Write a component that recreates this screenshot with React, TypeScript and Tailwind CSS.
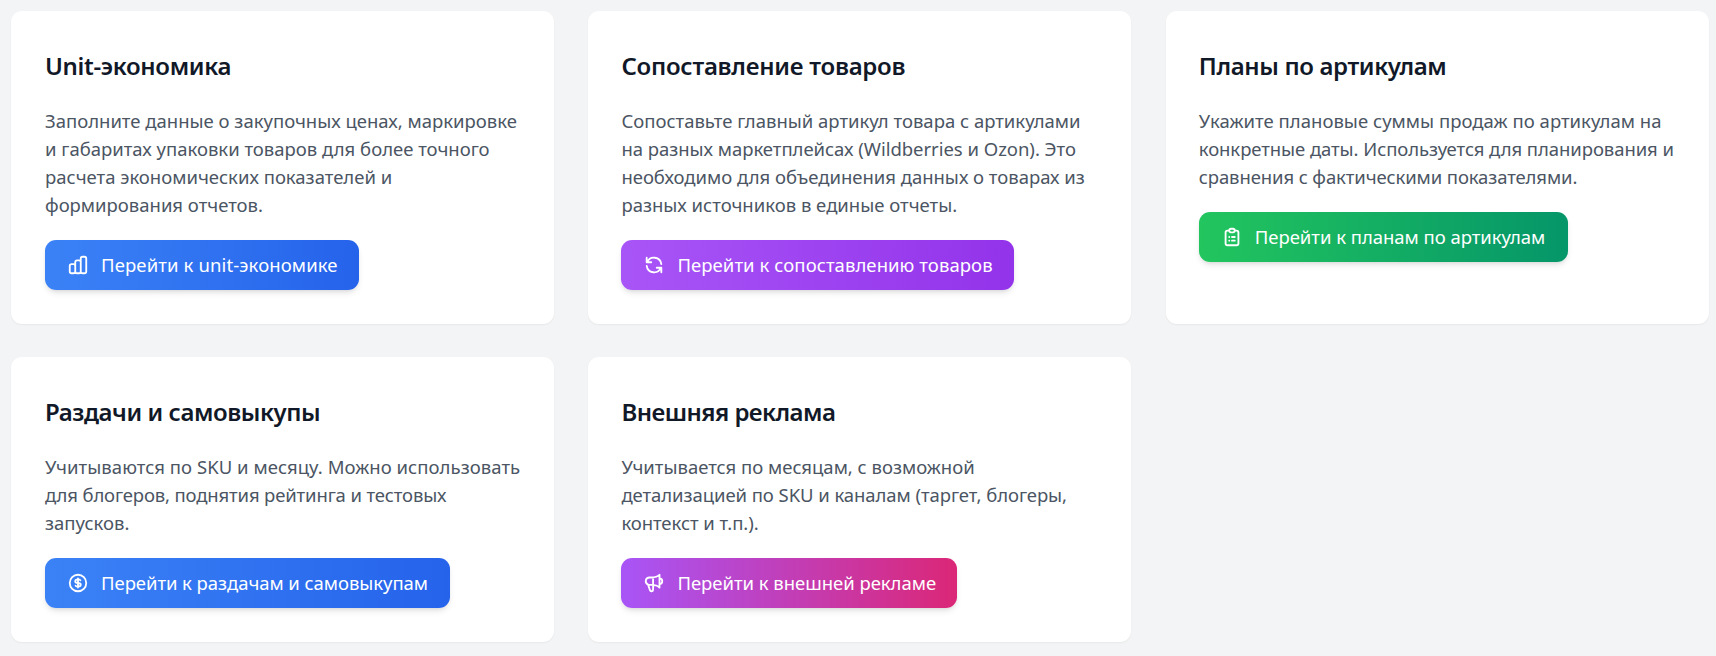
import React from "react";
import type { IconType } from "react-icons";
import {
  HiOutlineChartBar,
  HiOutlineClipboardList,
  HiOutlineCurrencyDollar,
  HiOutlineRefresh,
  HiOutlineSpeakerphone,
} from "react-icons/hi";

interface Line {
  text: string;
  tracking?: string;
}

interface Section {
  title: string;
  titleTracking: string;
  lines: Line[];
  action: string;
  Icon: IconType;
  padding: string;
  button: string;
}

const sections: Section[] = [
  {
    title: "Unit-экономика",
    titleTracking: "tracking-[-0.33px]",
    lines: [
      { text: "Заполните данные о закупочных ценах, маркировке" },
      { text: "и габаритах упаковки товаров для более точного" },
      { text: "расчета экономических показателей и" },
      { text: "формирования отчетов." },
    ],
    action: "Перейти к unit-экономике",
    Icon: HiOutlineChartBar,
    padding: "px-[34px]",
    button: "w-[314px] from-[#3b82f6] to-[#2563eb] tracking-[0.12px]",
  },
  {
    title: "Сопоставление товаров",
    titleTracking: "tracking-[-0.25px]",
    lines: [
      { text: "Сопоставьте главный артикул товара с артикулами" },
      { text: "на разных маркетплейсах (Wildberries и Ozon). Это", tracking: "tracking-[-0.03px]" },
      { text: "необходимо для объединения данных о товарах из", tracking: "tracking-[-0.02px]" },
      { text: "разных источников в единые отчеты." },
    ],
    action: "Перейти к сопоставлению товаров",
    Icon: HiOutlineRefresh,
    padding: "px-[33px]",
    button: "w-[393px] from-[#a855f7] to-[#9333ea] tracking-[0.07px]",
  },
  {
    title: "Планы по артикулам",
    titleTracking: "tracking-[-0.36px]",
    lines: [
      { text: "Укажите плановые суммы продаж по артикулам на", tracking: "tracking-[0.03px]" },
      { text: "конкретные даты. Используется для планирования и", tracking: "tracking-[-0.07px]" },
      { text: "сравнения с фактическими показателями.", tracking: "tracking-[-0.11px]" },
    ],
    action: "Перейти к планам по артикулам",
    Icon: HiOutlineClipboardList,
    padding: "px-[33px]",
    button: "w-[369px] from-[#22c55e] to-[#059669] tracking-[-0.03px]",
  },
  {
    title: "Раздачи и самовыкупы",
    titleTracking: "tracking-[-0.44px]",
    lines: [
      { text: "Учитываются по SKU и месяцу. Можно использовать", tracking: "tracking-[0.05px]" },
      { text: "для блогеров, поднятия рейтинга и тестовых", tracking: "tracking-[-0.14px]" },
      { text: "запусков." },
    ],
    action: "Перейти к раздачам и самовыкупам",
    Icon: HiOutlineCurrencyDollar,
    padding: "px-[34px]",
    button: "w-[405px] from-[#3b82f6] to-[#2563eb] tracking-[-0.06px]",
  },
  {
    title: "Внешняя реклама",
    titleTracking: "tracking-[-0.54px]",
    lines: [
      { text: "Учитывается по месяцам, с возможной" },
      { text: "детализацией по SKU и каналам (таргет, блогеры,", tracking: "tracking-[-0.06px]" },
      { text: "контекст и т.п.).", tracking: "tracking-[-0.06px]" },
    ],
    action: "Перейти к внешней рекламе",
    Icon: HiOutlineSpeakerphone,
    padding: "px-[33px]",
    button: "w-[336px] from-[#a855f7] to-[#db2777] tracking-[-0.03px]",
  },
];

function SectionCard({ title, titleTracking, lines, action, Icon, padding, button }: Section) {
  return (
    <section
      className={`flex flex-col items-start rounded-[11px] bg-white py-[34px] shadow-[0_1px_2px_0_rgba(0,0,0,0.05)] ${padding}`}
    >
      <h2
        className={`mb-[21px] text-2xl leading-[41px] font-[570] whitespace-nowrap text-[#111827] ${titleTracking}`}
      >
        {title}
      </h2>
      <p className="mb-[21px] text-[18.5px] leading-7 whitespace-nowrap text-[#4b5563]">
        {lines.map(({ text, tracking = "tracking-normal" }) => (
          <span key={text} className={`block ${tracking}`}>
            {text}
          </span>
        ))}
      </p>
      <button
        type="button"
        className={`flex h-[50px] items-center gap-3 rounded-[11px] bg-linear-to-r/srgb pl-[22px] text-[18.5px] leading-7 whitespace-nowrap text-white shadow-[0_4px_6px_-1px_rgba(0,0,0,0.1),0_2px_4px_-2px_rgba(0,0,0,0.1)] ${button}`}
      >
        <Icon className="size-[22px] shrink-0" />
        <span>{action}</span>
      </button>
    </section>
  );
}

export default function App() {
  return (
    <main className="h-[656px] bg-[#f3f4f6] pt-[11px] pl-[11px] font-['Noto_Sans','Open_Sans',sans-serif]">
      <div className="grid grid-cols-[543px_543px_543px] items-stretch gap-x-[34.4px] gap-y-[33px]">
        {sections.map((section) => (
          <SectionCard key={section.title} {...section} />
        ))}
      </div>
    </main>
  );
}
